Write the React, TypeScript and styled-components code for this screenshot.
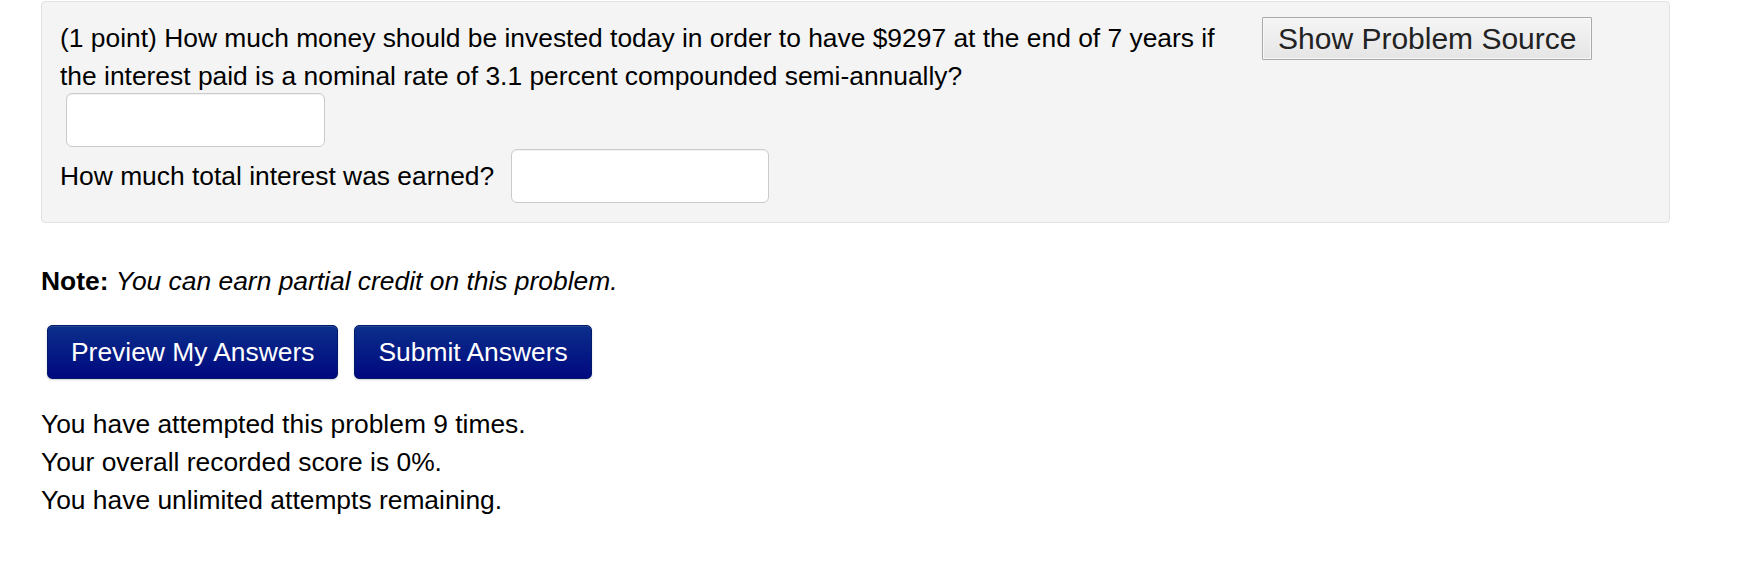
import { createGlobalStyle, styled } from 'styled-components';

const GlobalStyle = createGlobalStyle`
  html,
  body {
    margin: 0;
    padding: 0;
    background: #ffffff;
  }

  body {
    font-family: 'Liberation Sans', Arial, Helvetica, sans-serif;
    font-size: 26.4px;
    line-height: 38px;
    color: #000000;
  }
`;

const Page = styled.div`
  width: 1740px;
  height: 566px;
  box-sizing: border-box;
  padding: 1px 0 0 41px;
  overflow: hidden;
`;

const ProblemWell = styled.div`
  width: 1629px;
  box-sizing: border-box;
  display: flex;
  align-items: flex-start;
  padding: 17px 17px 19px 18px;
  background: #f4f4f4;
  border: 1px solid #e2e2e2;
  border-radius: 4px;
`;

const ProblemBody = styled.div`
  width: 1180px;
  flex-shrink: 0;
`;

const ProblemText = styled.p`
  margin: 0;
`;

const AnswerBlank = styled.input<{ $inline?: boolean }>`
  display: block;
  width: ${(p) => (p.$inline ? '258px' : '259px')};
  height: 54px;
  box-sizing: border-box;
  margin: ${(p) => (p.$inline ? '0' : '-2px 0 0 6px')};
  padding: 4px 10px;
  font: inherit;
  background: #ffffff;
  border: 1px solid #cbcbcb;
  border-radius: 6px;
  box-shadow: inset 0 1px 1px rgba(0, 0, 0, 0.06);
  outline: none;
`;

const QuestionRow = styled.div`
  display: flex;
  align-items: center;
  gap: 17px;
  margin-top: 2px;
`;

const SourceButton = styled.button`
  margin: -2px 0 0 22px;
  padding: 3px 15px;
  font-family: 'Liberation Sans', Arial, Helvetica, sans-serif;
  font-size: 30px;
  line-height: 35px;
  color: #222222;
  white-space: nowrap;
  background: linear-gradient(#f5f5f5, #e5e5e5);
  border: 1px solid #a9a9a9;
  border-radius: 1px;
  box-shadow: inset 0 0 0 1px #f8f8f8;
`;

const Note = styled.p`
  margin: 39px 0 0;
`;

const NoteLabel = styled.b`
  font-weight: 700;
`;

const NoteBody = styled.i`
  font-style: italic;
`;

const ButtonBar = styled.div`
  display: flex;
  gap: 16px;
  margin: 25px 0 0 6px;
`;

const SubmitButton = styled.button`
  height: 54px;
  box-sizing: border-box;
  padding: 0 23px;
  font-family: 'Liberation Sans', Arial, Helvetica, sans-serif;
  font-size: 26.4px;
  line-height: 32px;
  color: #ffffff;
  white-space: nowrap;
  background: linear-gradient(#0b2f8b, #00087f);
  border: 1px solid #001a6a;
  border-radius: 5px;
  box-shadow: 0 1px 2px rgba(0, 0, 40, 0.2), inset 0 1px 0 rgba(255, 255, 255, 0.12);
`;

const Status = styled.div`
  margin-top: 26px;
`;

const StatusLine = styled.div`
  line-height: 38px;
`;

function App() {
  return (
    <>
      <GlobalStyle />
      <Page>
        <ProblemWell>
          <ProblemBody>
            <ProblemText>
              (1 point) How much money should be invested today in order to have $9297 at the end of 7
              years if the interest paid is a nominal rate of 3.1 percent compounded semi-annually?
            </ProblemText>
            <AnswerBlank type="text" aria-label="amount to invest" />
            <QuestionRow>
              <span>How much total interest was earned?</span>
              <AnswerBlank $inline type="text" aria-label="total interest" />
            </QuestionRow>
          </ProblemBody>
          <SourceButton type="button">Show Problem Source</SourceButton>
        </ProblemWell>

        <Note>
          <NoteLabel>Note:</NoteLabel> <NoteBody>You can earn partial credit on this problem.</NoteBody>
        </Note>

        <ButtonBar>
          <SubmitButton type="button">Preview My Answers</SubmitButton>
          <SubmitButton type="button">Submit Answers</SubmitButton>
        </ButtonBar>

        <Status>
          <StatusLine>You have attempted this problem 9 times.</StatusLine>
          <StatusLine>Your overall recorded score is 0%.</StatusLine>
          <StatusLine>You have unlimited attempts remaining.</StatusLine>
        </Status>
      </Page>
    </>
  );
}

export default App;
